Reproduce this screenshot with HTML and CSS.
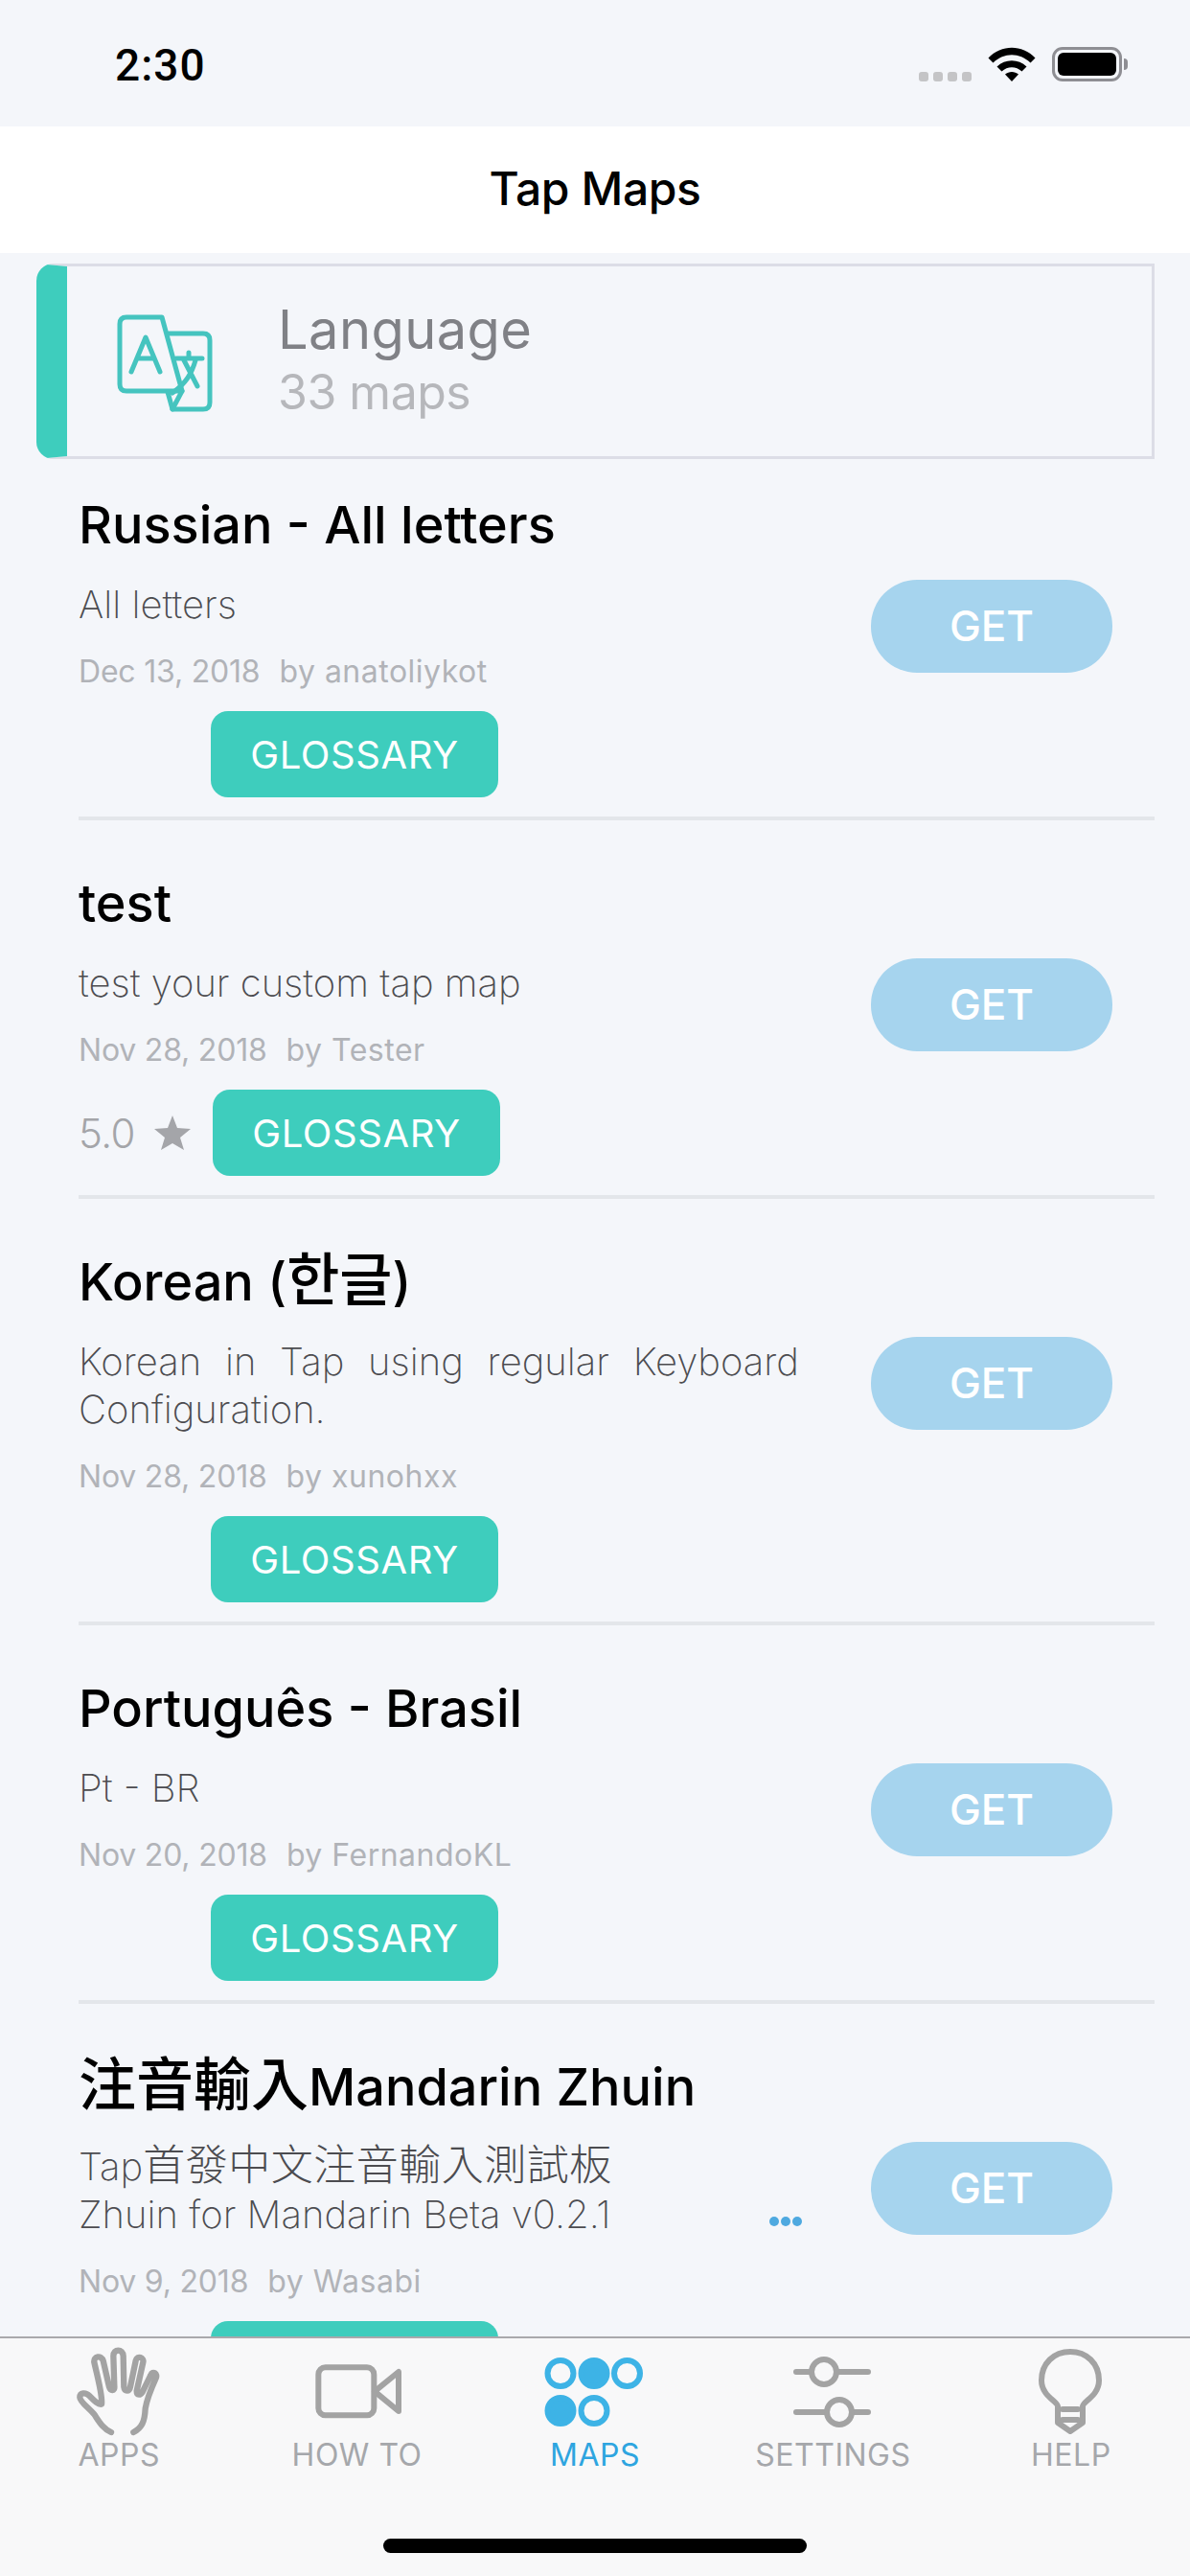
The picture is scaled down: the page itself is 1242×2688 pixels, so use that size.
FILE: index.html
```html
<!DOCTYPE html>
<html lang="en">
<head>
<meta charset="UTF-8" />
<meta name="viewport" content="width=device-width, initial-scale=1" />
<title>Tap Maps</title>
<link rel="stylesheet" href="styles.css">
</head>
<body>

<div class="status-bar">
  <span class="clock">2:30</span>
  <div class="status-icons">
    <div class="signal"><i></i><i></i><i></i><i></i></div>
    <svg class="wifi" width="50" height="36" viewBox="0 0 50 36">
      <path d="M0.5 11.5 C14 -3 36 -3 49.5 11.5 L44.5 16.5 C33 5.5 17 5.5 5.5 16.5 Z" fill="#000"/>
      <path d="M9.5 20.5 C18 12 32 12 40.5 20.5 L35.5 25.5 C29.5 19.8 20.5 19.8 14.5 25.5 Z" fill="#000"/>
      <path d="M18 28.5 C22 25 28 25 32 28.5 L25 36 Z" fill="#000"/>
    </svg>
    <div class="battery"><div class="battery-fill"></div></div>
  </div>
</div>

<header class="nav-bar">Tap Maps</header>

<main class="content">
  <section class="category">
    <svg class="category-icon" width="100" height="102" viewBox="0 0 100 102" fill="none" stroke="#45c4bf" stroke-width="5" stroke-linecap="round" stroke-linejoin="round">
      <path d="M47 3 H10 Q3 3 3 10 V73 Q3 80 10 80 H68 L47 3 Z"/>
      <path d="M54 20 H90 Q97 20 97 27 V92 Q97 99 90 99 H58 L53 81"/>
      <path d="M15 60 L30 24 L45 60 M21 46 H39"/>
      <path d="M62 46 H89 M75 40 V46 M69 46 L84 75 M82 48 C78 62 72 72 58 82"/>
      <path d="M68 80 L58 99"/>
    </svg>
    <div class="category-text">
      <div class="category-name">Language</div>
      <div class="category-count">33 maps</div>
    </div>
  </section>

  <article class="map-row">
    <div class="map-info">
      <h2 class="map-title">Russian - All letters</h2>
      <p class="map-desc">All letters</p>
      <p class="map-meta"><span>Dec 13, 2018</span><span class="map-author">by anatoliykot</span></p>
      <div class="map-actions">
        <a class="glossary">GLOSSARY</a>
      </div>
    </div>
    <a class="get-btn">GET</a>
  </article>

  <article class="map-row">
    <div class="map-info">
      <h2 class="map-title">test</h2>
      <p class="map-desc">test your custom tap map</p>
      <p class="map-meta"><span>Nov 28, 2018</span><span class="map-author">by Tester</span></p>
      <div class="map-actions">
        <div class="rating">
          <span>5.0</span>
          <svg width="38" height="36" viewBox="0 0 38 36"><path d="M19 0 L24 13 L38 14 L27 23 L31 36 L19 29 L7 36 L11 23 L0 14 L14 13 Z" fill="#a4a5a9"/></svg>
        </div>
        <a class="glossary">GLOSSARY</a>
      </div>
    </div>
    <a class="get-btn">GET</a>
  </article>

  <article class="map-row">
    <div class="map-info">
      <h2 class="map-title">Korean (<span class="cjk">한글</span>)</h2>
      <p class="map-desc">Korean in Tap using regular Keyboard Configuration.</p>
      <p class="map-meta"><span>Nov 28, 2018</span><span class="map-author">by xunohxx</span></p>
      <div class="map-actions">
        <a class="glossary">GLOSSARY</a>
      </div>
    </div>
    <a class="get-btn">GET</a>
  </article>

  <article class="map-row">
    <div class="map-info">
      <h2 class="map-title">Português - Brasil</h2>
      <p class="map-desc">Pt - BR</p>
      <p class="map-meta"><span>Nov 20, 2018</span><span class="map-author">by FernandoKL</span></p>
      <div class="map-actions">
        <a class="glossary">GLOSSARY</a>
      </div>
    </div>
    <a class="get-btn">GET</a>
  </article>

  <article class="map-row">
    <div class="map-info">
      <h2 class="map-title"><span class="cjk">注音輸入</span>Mandarin Zhuin</h2>
      <p class="map-desc map-desc-more">Tap<span class="cjk">首發中文注音輸入測試板</span><br>Zhuin for Mandarin Beta v0.2.1<span class="more-dots"><i></i><i></i><i></i></span></p>
      <p class="map-meta"><span>Nov 9, 2018</span><span class="map-author">by Wasabi</span></p>
      <div class="map-actions">
        <a class="glossary">GLOSSARY</a>
      </div>
    </div>
    <a class="get-btn">GET</a>
  </article>
</main>

<nav class="tab-bar">
  <div class="tabs">
    <div class="tab">
      <svg width="120" height="96" viewBox="72 84 360 288" fill="none" stroke="#a3a3a3" stroke-width="19" stroke-linecap="round" stroke-linejoin="round">
        <path d="M228 354 C200 340 190 320 175 298 C160 280 130 258 130 245 C130 230 148 228 160 240 C172 252 185 268 198 266 C202 240 185 180 175 135 C172 115 198 112 203 130 L222 212 C226 226 240 226 238 210 L235 115 C235 92 265 92 266 115 L268 212 C270 228 285 228 288 212 L305 130 C310 112 332 120 328 135 L308 225 C308 240 320 238 326 228 L352 175 C358 160 375 170 368 185 C350 225 340 250 335 280 C333 320 325 340 298 354"/>
      </svg>
      <span>APPS</span>
    </div>
    <div class="tab">
      <svg width="120" height="96" viewBox="816 84 360 288" fill="none" stroke="#a3a3a3" stroke-width="18" stroke-linejoin="round">
        <rect x="874" y="151" width="174" height="150" rx="22"/>
        <path d="M1050 226 L1125 165 V288 Z"/>
      </svg>
      <span>HOW TO</span>
    </div>
    <div class="tab tab-active">
      <svg width="120" height="96" viewBox="0 0 120 96" fill="#3db3e6" stroke="#3db3e6" stroke-width="6">
        <circle cx="24" cy="28.5" r="13.5" fill="none"/>
        <circle cx="59" cy="28.5" r="13.5"/>
        <circle cx="93.5" cy="28.5" r="13.5" fill="none"/>
        <circle cx="24" cy="67.5" r="13.5"/>
        <circle cx="59" cy="67.5" r="13.5" fill="none"/>
      </svg>
      <span>MAPS</span>
    </div>
    <div class="tab">
      <svg width="120" height="96" viewBox="0 0 120 96" fill="none" stroke="#a3a3a3" stroke-width="6" stroke-linecap="round">
        <path d="M22 27 H97 M22 69 H97"/>
        <circle cx="51" cy="27" r="13" fill="#f8f8f9"/>
        <circle cx="67" cy="69" r="13" fill="#f8f8f9"/>
      </svg>
      <span>SETTINGS</span>
    </div>
    <div class="tab">
      <svg width="120" height="96" viewBox="0 0 120 96" fill="none" stroke="#a3a3a3" stroke-width="6" stroke-linecap="round" stroke-linejoin="round">
        <path d="M46 80 V63 C46 58 29 52 29 36 C29 18 42 6 59 6 C76 6 89 18 89 36 C89 52 72 58 72 63 V80 L59 89 Z"/>
        <path d="M51 66 H67 M51 77 H67"/>
      </svg>
      <span>HELP</span>
    </div>
  </div>
  <div class="home-indicator"></div>
</nav>

</body>
</html>
```

FILE: styles.css
```css
* {
  box-sizing: border-box;
}
body {
  margin: 0;
  width: 1242px;
  height: 2688px;
  display: flex;
  flex-direction: column;
  overflow: hidden;
  background: #f4f6fa;
  color: #000;
  font-family: "Inter", "Noto Sans CJK TC", sans-serif;
}

/* status bar */
.status-bar {
  height: 132px;
  flex: none;
  display: flex;
  justify-content: space-between;
  padding: 42px 71px 0 120px;
}
.clock {
  font-family: "Roboto", sans-serif;
  font-weight: 500;
  font-size: 46px;
  line-height: 52px;
  letter-spacing: 1px;
}
.status-icons {
  display: flex;
  align-items: flex-end;
  height: 36px;
  margin-top: 7px;
}
.signal {
  display: flex;
  gap: 5px;
  margin-right: 17px;
}
.signal i {
  width: 10px;
  height: 10px;
  border-radius: 3px;
  background: #c4c4c6;
}
.wifi {
  margin-right: 17px;
}
.battery {
  position: relative;
  width: 73px;
  height: 36px;
  border: 3px solid #8e8e93;
  border-radius: 11px;
  padding: 3px;
}
.battery::after {
  content: "";
  position: absolute;
  right: -9px;
  top: 9px;
  width: 4px;
  height: 12px;
  border-radius: 0 4px 4px 0;
  background: #8e8e93;
}
.battery-fill {
  height: 100%;
  background: #000;
  border-radius: 6px;
}

/* nav */
.nav-bar {
  height: 132px;
  flex: none;
  background: #fff;
  text-align: center;
  font-size: 48px;
  font-weight: 500;
  letter-spacing: -0.4px;
  line-height: 130px;
}

.content {
  flex: 1;
  min-height: 0;
  overflow: hidden;
  padding-top: 11px;
}

/* category header */
.category {
  height: 204px;
  margin: 0 37px 0 38px;
  display: flex;
  align-items: center;
  border: 3px solid #dcdde6;
  border-left: 32px solid #3ecdbd;
  border-radius: 18px 0 0 18px;
  padding-left: 52px;
}
.category-icon {
  flex: none;
  margin-top: 3px;
}
.category-text {
  margin-left: 68px;
}
.category-name {
  font-size: 56px;
  letter-spacing: 0.4px;
  line-height: 66px;
  margin-top: -5px;
  color: #808186;
}
.category-count {
  margin-top: 2px;
  font-size: 50px;
  letter-spacing: -0.5px;
  line-height: 60px;
  color: #b6b7bb;
}

/* map rows */
.map-row {
  margin: 0 37px 0 82px;
  display: flex;
  justify-content: space-between;
  align-items: flex-start;
  border-bottom: 4px solid #e3e6ea;
  padding: 57px 45px 20px 0;
}
.category + .map-row {
  padding-top: 39px;
}
.map-info {
  width: 752px;
}
.map-title {
  margin: 0;
  font-size: 54px;
  font-weight: 500;
  line-height: 60px;
}
.map-title .cjk {
  font-size: 60px;
  line-height: 0;
}
.map-desc {
  margin: 28px 0 0;
  font-size: 40px;
  font-weight: 200;
  line-height: 50px;
  color: #4c4c50;
  text-align: justify;
}
.map-desc .cjk {
  font-size: 44px;
  line-height: 0;
  letter-spacing: 0.5px;
}
.map-desc-more {
  position: relative;
}
.more-dots {
  position: absolute;
  right: -3px;
  bottom: 13px;
  display: flex;
  gap: 2px;
}
.more-dots i {
  width: 10px;
  height: 10px;
  border-radius: 50%;
  background: #4ea9e0;
}
.map-meta {
  margin: 25px 0 0;
  display: flex;
  gap: 20px;
  font-size: 32px;
  letter-spacing: -0.2px;
  line-height: 40px;
  color: #b1b3b8;
}
.map-author {
  letter-spacing: 0.5px;
}
.map-actions {
  margin-top: 21px;
  display: flex;
  align-items: center;
  padding-left: 138px;
}
.rating {
  margin-left: -138px;
  width: 140px;
  display: flex;
  align-items: center;
  gap: 20px;
  font-size: 42px;
  font-weight: 300;
  letter-spacing: -0.6px;
  color: #a4a5a9;
}
.glossary {
  width: 300px;
  height: 90px;
  border-radius: 18px;
  background: #3ecdbd;
  color: #fff;
  font-size: 40px;
  letter-spacing: 0.6px;
  line-height: 92px;
  text-align: center;
}
.get-btn {
  margin-top: 87px;
  margin-right: -1px;
  width: 252px;
  height: 97px;
  flex: none;
  border-radius: 48px;
  background: #a6d4ee;
  color: #fff;
  font-size: 44px;
  font-weight: 500;
  line-height: 97px;
  text-align: center;
}

/* tab bar */
.tab-bar {
  height: 250px;
  flex: none;
  position: relative;
  background: #f8f8f9;
  border-top: 2px solid #a9a9ac;
}
.tabs {
  display: grid;
  grid-template-columns: repeat(5, 1fr);
  padding-top: 8px;
}
.tab {
  display: flex;
  flex-direction: column;
  align-items: center;
  font-size: 32px;
  letter-spacing: 0.5px;
  line-height: 36px;
  color: #a5a7ab;
}
.tab-active {
  color: #2ea5e0;
}
.home-indicator {
  position: absolute;
  left: 400px;
  bottom: 24px;
  width: 442px;
  height: 15px;
  border-radius: 8px;
  background: #000;
}
```
